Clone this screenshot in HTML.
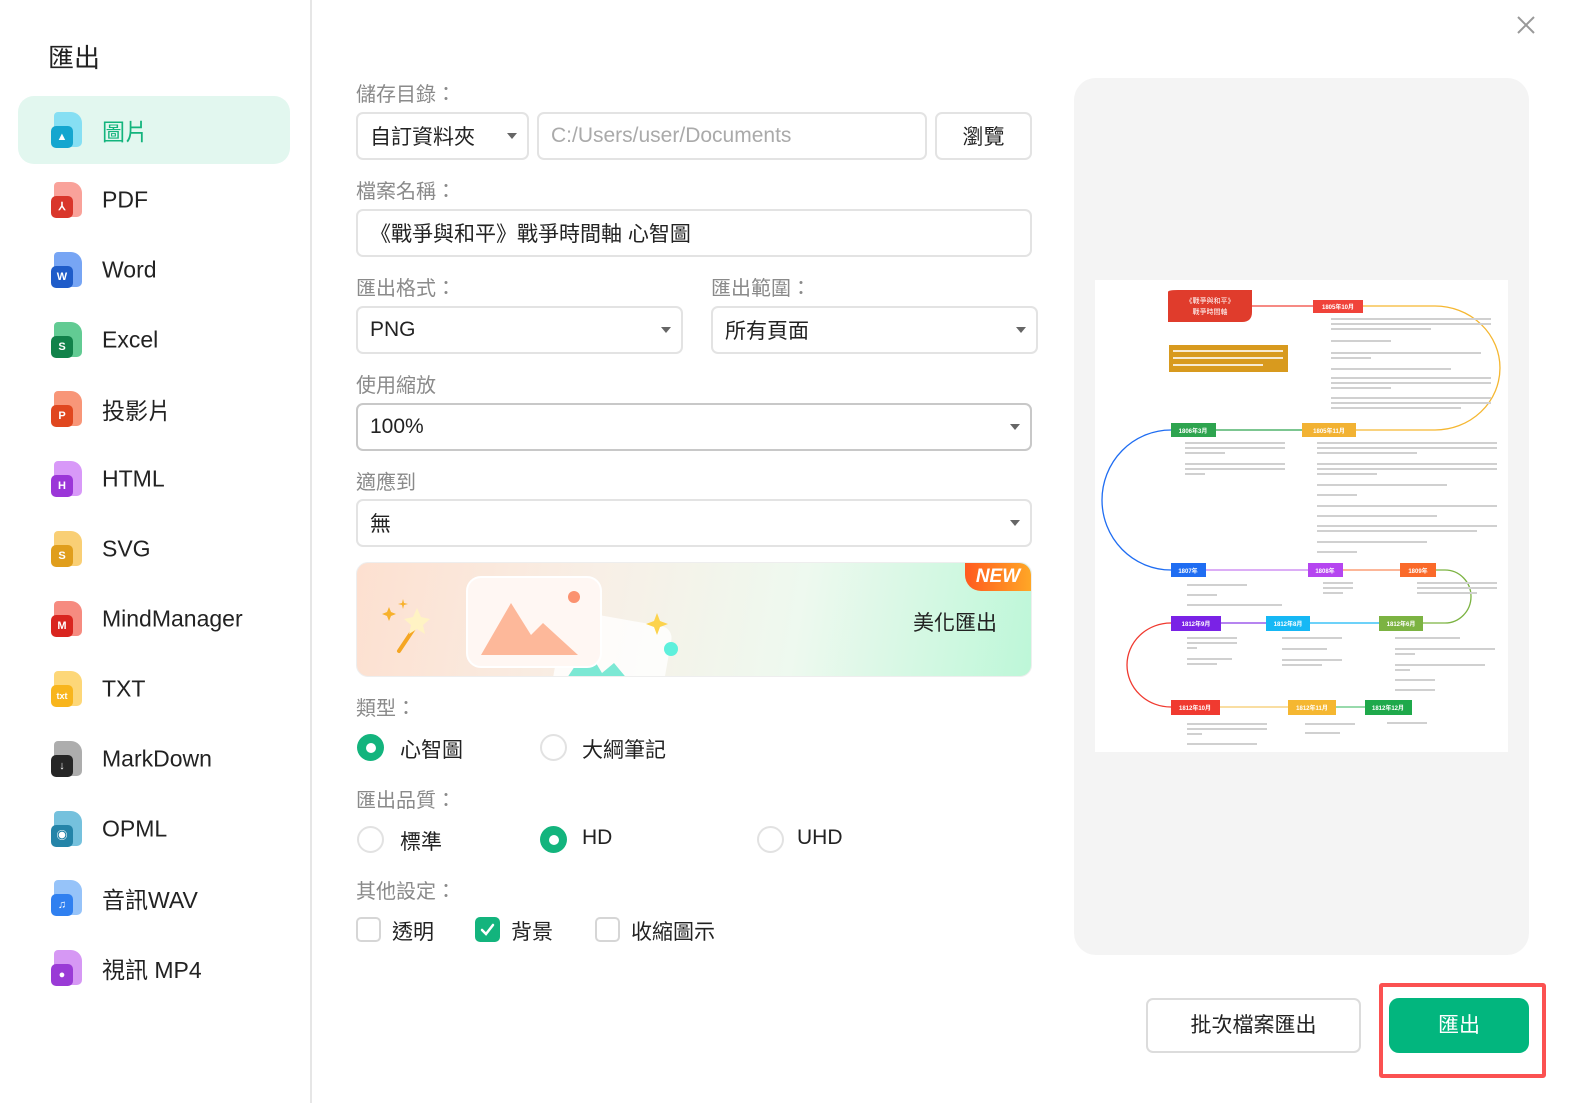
<!DOCTYPE html>
<html><head><meta charset="utf-8">
<style>
*{box-sizing:border-box;margin:0;padding:0}
body{width:1572px;height:1103px;background:#fff;position:relative;overflow:hidden;font-family:"Liberation Sans","Noto Sans CJK TC",sans-serif;color:#222}
.abs{position:absolute}
.side{left:0;top:0;width:312px;height:1103px;border-right:2px solid #e6e6e6}
.title{left:48px;top:38px;font-size:26px;color:#222}
.item{position:absolute;left:18px;width:272px;height:68px}
.item.act{background:#e2f7ef;border-radius:16px}
.item span{position:absolute;left:84px;top:50%;transform:translateY(-50%);font-size:23px;color:#222}
.item.act span{color:#13b47d}
.ic{position:absolute;left:33px;top:50%;margin-top:-18px;width:31px;height:36px}
.ic .f{position:absolute;left:3px;top:0;width:28px;height:35px;border-radius:4px 11px 5px 5px;opacity:.7}
.ic .b{position:absolute;left:0;bottom:0;width:22px;height:22px;border-radius:5px;color:#fff;font-size:11px;font-weight:bold;text-align:center;line-height:22px}
.lbl{position:absolute;left:356px;font-size:20px;color:#8a8a8a}
.box{position:absolute;border:2px solid #e3e3e3;border-radius:7px;background:#fff;font-size:21px;color:#222;padding-left:12px;display:flex;align-items:center}
.arrow{position:absolute;right:10px;top:50%;margin-top:-3px;width:0;height:0;border-left:5px solid transparent;border-right:5px solid transparent;border-top:6px solid #666}
.radio{position:absolute;width:27px;height:27px;border-radius:50%;border:2px solid #e2e2e2}
.radio.on{border:none;background:#13b47d}
.radio.on::after{content:"";position:absolute;left:8.5px;top:8.5px;width:10px;height:10px;border-radius:50%;background:#fff}
.rt{position:absolute;font-size:21px;color:#222}
.cb{position:absolute;width:25px;height:25px;border:2px solid #d6d6d6;border-radius:5px}
.cb.on{background:#13b47d;border-color:#13b47d}
</style></head><body>
<div class="abs side"></div>
<div class="abs title">匯出</div>

<div class="item act" style="top:96px"><div class="ic"><div class="f" style="background:#5fd4f5"></div><div class="b" style="background:#14a6cf">▲</div></div><span>圖片</span></div>
<div class="item" style="top:166px"><div class="ic"><div class="f" style="background:#f77a6f"></div><div class="b" style="background:#d9362b">⅄</div></div><span>PDF</span></div>
<div class="item" style="top:236px"><div class="ic"><div class="f" style="background:#3d7ff0"></div><div class="b" style="background:#1f5cc9">W</div></div><span>Word</span></div>
<div class="item" style="top:306px"><div class="ic"><div class="f" style="background:#1fb565"></div><div class="b" style="background:#11824a">S</div></div><span>Excel</span></div>
<div class="item" style="top:375px"><div class="ic"><div class="f" style="background:#f56a3f"></div><div class="b" style="background:#e0471f">P</div></div><span>投影片</span></div>
<div class="item" style="top:445px"><div class="ic"><div class="f" style="background:#c86df5"></div><div class="b" style="background:#9b36d8">H</div></div><span>HTML</span></div>
<div class="item" style="top:515px"><div class="ic"><div class="f" style="background:#f7bb3a"></div><div class="b" style="background:#e09e1c">S</div></div><span>SVG</span></div>
<div class="item" style="top:585px"><div class="ic"><div class="f" style="background:#f25a4a"></div><div class="b" style="background:#d9251f">M</div></div><span>MindManager</span></div>
<div class="item" style="top:655px"><div class="ic"><div class="f" style="background:#fcc63e"></div><div class="b" style="background:#f8b51c;font-size:9px">txt</div></div><span>TXT</span></div>
<div class="item" style="top:725px"><div class="ic"><div class="f" style="background:#8a8a8a"></div><div class="b" style="background:#262626">↓</div></div><span>MarkDown</span></div>
<div class="item" style="top:795px"><div class="ic"><div class="f" style="background:#3aa6cf"></div><div class="b" style="background:#2484a8">◉</div></div><span>OPML</span></div>
<div class="item" style="top:864px"><div class="ic"><div class="f" style="background:#6aaaf7"></div><div class="b" style="background:#3080f0">♫</div></div><span>音訊WAV</span></div>
<div class="item" style="top:934px"><div class="ic"><div class="f" style="background:#c46cf0"></div><div class="b" style="background:#9a3bd6">●</div></div><span>視訊 MP4</span></div>

<svg class="abs" style="left:1516px;top:15px" width="20" height="20"><path d="M2 2L18 18M18 2L2 18" stroke="#999" stroke-width="2"/></svg>

<div class="lbl" style="top:78px">儲存目錄：</div>
<div class="box" style="left:356px;top:112px;width:173px;height:48px">自訂資料夾<div class="arrow"></div></div>
<div class="box" style="left:537px;top:112px;width:390px;height:48px;color:#aaa">C:/Users/user/Documents</div>
<div class="box" style="left:935px;top:112px;width:97px;height:48px;justify-content:center;padding:0">瀏覽</div>
<div class="lbl" style="top:175px">檔案名稱：</div>
<div class="box" style="left:356px;top:209px;width:676px;height:48px">《戰爭與和平》戰爭時間軸 心智圖</div>
<div class="lbl" style="top:272px">匯出格式：</div>
<div class="lbl" style="top:272px;left:711px">匯出範圍：</div>
<div class="box" style="left:356px;top:306px;width:327px;height:48px">PNG<div class="arrow"></div></div>
<div class="box" style="left:711px;top:306px;width:327px;height:48px">所有頁面<div class="arrow"></div></div>
<div class="lbl" style="top:369px">使用縮放</div>
<div class="box" style="left:356px;top:403px;width:676px;height:48px;border-color:#c8c8c8">100%<div class="arrow"></div></div>
<div class="lbl" style="top:466px">適應到</div>
<div class="box" style="left:356px;top:499px;width:676px;height:48px">無<div class="arrow"></div></div>

<div class="abs" style="left:356px;top:562px;width:676px;height:115px;border-radius:12px;border:1px solid #eee;background:linear-gradient(100deg,#fde0d0 0%,#f8efe6 35%,#eef9ef 65%,#bdf7d8 100%);overflow:hidden">
  <svg class="abs" style="left:0;top:0" width="460" height="115">
    <path d="M42 88L62 58" stroke="#f5a623" stroke-width="4" stroke-linecap="round"/>
    <path d="M60 45l4 9 9 2-7 6 2 9-8-5-8 5 2-9-7-6 9-2z" fill="#fff3c4"/>
    <path d="M32 44l2 5 5 2-5 2-2 5-2-5-5-2 5-2z" fill="#f7b12c"/>
    <path d="M46 36l1 4 4 1-4 1-1 4-1-4-4-1 4-1z" fill="#f7b12c"/>
    <rect x="200" y="55" width="110" height="85" rx="12" fill="#fff" opacity=".8" transform="rotate(10 255 97)"/>
    <path d="M210 115l20-30 15 25 12-10 25 30z" fill="#7ce8d4"/>
    <circle cx="314" cy="86" r="7" fill="#5ef0dc"/>
    <path d="M300 50l3 8 8 3-8 3-3 8-3-8-8-3 8-3z" fill="#fcd34d"/>
    <rect x="110" y="14" width="134" height="90" rx="14" fill="#fff7f3" stroke="#fff" stroke-width="2"/>
    <path d="M124 92l30-52 20 32 12-12 35 32z" fill="#fdb89a"/>
    <circle cx="217" cy="34" r="6" fill="#fb9270"/>
  </svg>
  <div class="abs" style="right:34px;top:44px;font-size:21px;color:#222">美化匯出</div>
  <div class="abs" style="right:0;top:0;width:66px;height:28px;border-radius:0 12px 0 16px;background:linear-gradient(90deg,#ff5a1f,#ffa726);color:#fff;font-weight:bold;font-style:italic;font-size:19px;text-align:center;line-height:28px">NEW</div>
</div>

<div class="lbl" style="top:692px">類型：</div>
<div class="radio on" style="left:357px;top:734px"></div><div class="rt" style="left:400px;top:734px">心智圖</div>
<div class="radio" style="left:540px;top:734px"></div><div class="rt" style="left:582px;top:734px">大綱筆記</div>
<div class="lbl" style="top:784px">匯出品質：</div>
<div class="radio" style="left:357px;top:826px"></div><div class="rt" style="left:400px;top:826px">標準</div>
<div class="radio on" style="left:540px;top:826px"></div><div class="rt" style="left:582px;top:826px">HD</div>
<div class="radio" style="left:757px;top:826px"></div><div class="rt" style="left:797px;top:826px">UHD</div>
<div class="lbl" style="top:875px">其他設定：</div>
<div class="cb" style="left:356px;top:917px"></div><div class="rt" style="left:392px;top:916px">透明</div>
<div class="cb on" style="left:475px;top:917px"><svg width="21" height="21" style="position:absolute;left:0;top:0"><path d="M5 11l4 4 7-9" stroke="#fff" stroke-width="2.5" fill="none" stroke-linecap="round"/></svg></div><div class="rt" style="left:511px;top:916px">背景</div>
<div class="cb" style="left:595px;top:917px"></div><div class="rt" style="left:631px;top:916px">收縮圖示</div>

<div class="abs" style="left:1074px;top:78px;width:455px;height:877px;background:#f4f4f4;border-radius:22px"></div>
<svg class="abs" style="left:1095px;top:280px;background:#fff" width="413" height="472" viewBox="0 0 413 472">
<g fill="none" stroke-width="1.3">
<path d="M157 26H218" stroke="#f0433a"/>
<path d="M268 26H340a65 62 0 0 1 0 124H261" stroke="#f5b731"/>
<path d="M121 150H207" stroke="#2ea44f"/>
<path d="M76 150H76a69 70 0 0 0 0 140" stroke="#1f6df2"/>
<path d="M111 290H213" stroke="#c77cf0"/>
<path d="M248 290H305" stroke="#fb8a5a"/>
<path d="M341 290H350a26 26.5 0 0 1 0 53H328" stroke="#7cb342"/>
<path d="M215 343H284" stroke="#16b8f5"/>
<path d="M126 343H171" stroke="#8a3ae6"/>
<path d="M76 343a44 42 0 0 0 0 84" stroke="#f03a30"/>
<path d="M125 427H193" stroke="#f5c96b"/>
<path d="M241 427H270" stroke="#5ac37a"/>
</g>
<path d="M73 12q0-2 10-2h74v22q0 10-10 10H73z" fill="#e03c2c"/>
<text x="115" y="23" font-size="7" fill="#fff" text-anchor="middle">《戰爭與和平》</text>
<text x="115" y="34" font-size="7" fill="#fff" text-anchor="middle">戰爭時間軸</text>
<rect x="74" y="65" width="119" height="27" fill="#d89a1e"/>
<g fill="#fff" opacity=".8"><rect x="78" y="70" width="110" height="2"/><rect x="78" y="77" width="110" height="2"/><rect x="78" y="84" width="90" height="2"/></g>
<g font-size="6" fill="#fff" font-weight="bold" text-anchor="middle">
<rect x="218" y="20" width="50" height="13" fill="#f0433a"/><text x="243" y="29">1805年10月</text>
<rect x="76" y="143" width="45" height="14" fill="#2ea44f"/><text x="98" y="153">1806年3月</text>
<rect x="207" y="143" width="54" height="14" fill="#f2b233"/><text x="234" y="153">1805年11月</text>
<rect x="76" y="283" width="35" height="14" fill="#1f6df2"/><text x="93" y="293">1807年</text>
<rect x="213" y="283" width="35" height="14" fill="#b545f0"/><text x="230" y="293">1808年</text>
<rect x="305" y="283" width="36" height="14" fill="#fa6a2a"/><text x="323" y="293">1809年</text>
<rect x="76" y="336" width="50" height="15" fill="#7a22e6"/><text x="101" y="346">1812年9月</text>
<rect x="171" y="336" width="44" height="15" fill="#16b8f5"/><text x="193" y="346">1812年8月</text>
<rect x="284" y="336" width="44" height="15" fill="#7cb342"/><text x="306" y="346">1812年6月</text>
<rect x="76" y="420" width="49" height="15" fill="#f03a30"/><text x="100" y="430">1812年10月</text>
<rect x="193" y="420" width="48" height="15" fill="#f5b731"/><text x="217" y="430">1812年11月</text>
<rect x="270" y="420" width="47" height="15" fill="#1fa94b"/><text x="293" y="430">1812年12月</text>
</g>
<g fill="#d0d0d0">
<rect x="236" y="38" width="160" height="2"/><rect x="236" y="43" width="160" height="2"/><rect x="236" y="48" width="100" height="2"/>
<rect x="236" y="60" width="60" height="2"/><rect x="236" y="72" width="150" height="2"/><rect x="236" y="77" width="40" height="2"/>
<rect x="236" y="88" width="120" height="2"/><rect x="236" y="97" width="160" height="2"/><rect x="236" y="102" width="160" height="2"/><rect x="236" y="107" width="60" height="2"/>
<rect x="236" y="117" width="160" height="2"/><rect x="236" y="122" width="160" height="2"/><rect x="236" y="127" width="130" height="2"/>
<rect x="90" y="162" width="100" height="2"/><rect x="90" y="167" width="100" height="2"/><rect x="90" y="172" width="40" height="2"/>
<rect x="90" y="183" width="100" height="2"/><rect x="90" y="188" width="100" height="2"/><rect x="90" y="193" width="20" height="2"/>
<rect x="222" y="162" width="180" height="2"/><rect x="222" y="167" width="180" height="2"/><rect x="222" y="172" width="100" height="2"/>
<rect x="222" y="183" width="180" height="2"/><rect x="222" y="188" width="180" height="2"/><rect x="222" y="193" width="60" height="2"/>
<rect x="222" y="204" width="130" height="2"/><rect x="222" y="214" width="40" height="2"/><rect x="222" y="225" width="180" height="2"/>
<rect x="222" y="235" width="120" height="2"/><rect x="222" y="245" width="180" height="2"/><rect x="222" y="250" width="160" height="2"/>
<rect x="222" y="261" width="110" height="2"/><rect x="222" y="271" width="40" height="2"/>
<rect x="92" y="304" width="60" height="2"/><rect x="92" y="314" width="30" height="2"/><rect x="92" y="324" width="95" height="2"/>
<rect x="228" y="302" width="30" height="2"/><rect x="228" y="307" width="30" height="2"/><rect x="228" y="312" width="20" height="2"/>
<rect x="322" y="302" width="80" height="2"/><rect x="322" y="307" width="80" height="2"/><rect x="322" y="312" width="60" height="2"/>
<rect x="92" y="357" width="50" height="2"/><rect x="92" y="362" width="50" height="2"/><rect x="92" y="367" width="10" height="2"/><rect x="92" y="378" width="45" height="2"/><rect x="92" y="383" width="30" height="2"/>
<rect x="187" y="357" width="60" height="2"/><rect x="187" y="368" width="45" height="2"/><rect x="187" y="379" width="60" height="2"/><rect x="187" y="384" width="40" height="2"/>
<rect x="300" y="357" width="65" height="2"/><rect x="300" y="368" width="100" height="2"/><rect x="300" y="373" width="20" height="2"/><rect x="300" y="384" width="90" height="2"/><rect x="300" y="389" width="15" height="2"/><rect x="300" y="399" width="40" height="2"/><rect x="300" y="409" width="40" height="2"/>
<rect x="92" y="443" width="80" height="2"/><rect x="92" y="448" width="80" height="2"/><rect x="92" y="453" width="15" height="2"/><rect x="92" y="463" width="70" height="2"/>
<rect x="210" y="443" width="50" height="2"/><rect x="210" y="452" width="35" height="2"/>
<rect x="292" y="442" width="40" height="2"/>
</g>
</svg>

<div class="abs" style="left:1146px;top:998px;width:215px;height:55px;border:2px solid #dcdcdc;border-radius:7px;font-size:21px;text-align:center;line-height:51px;color:#222">批次檔案匯出</div>
<div class="abs" style="left:1379px;top:983px;width:167px;height:95px;border:4px solid #fb5151;border-radius:3px"></div>
<div class="abs" style="left:1389px;top:998px;width:140px;height:55px;background:#02b67e;border-radius:10px;font-size:21px;text-align:center;line-height:55px;color:#fff">匯出</div>
</body></html>
